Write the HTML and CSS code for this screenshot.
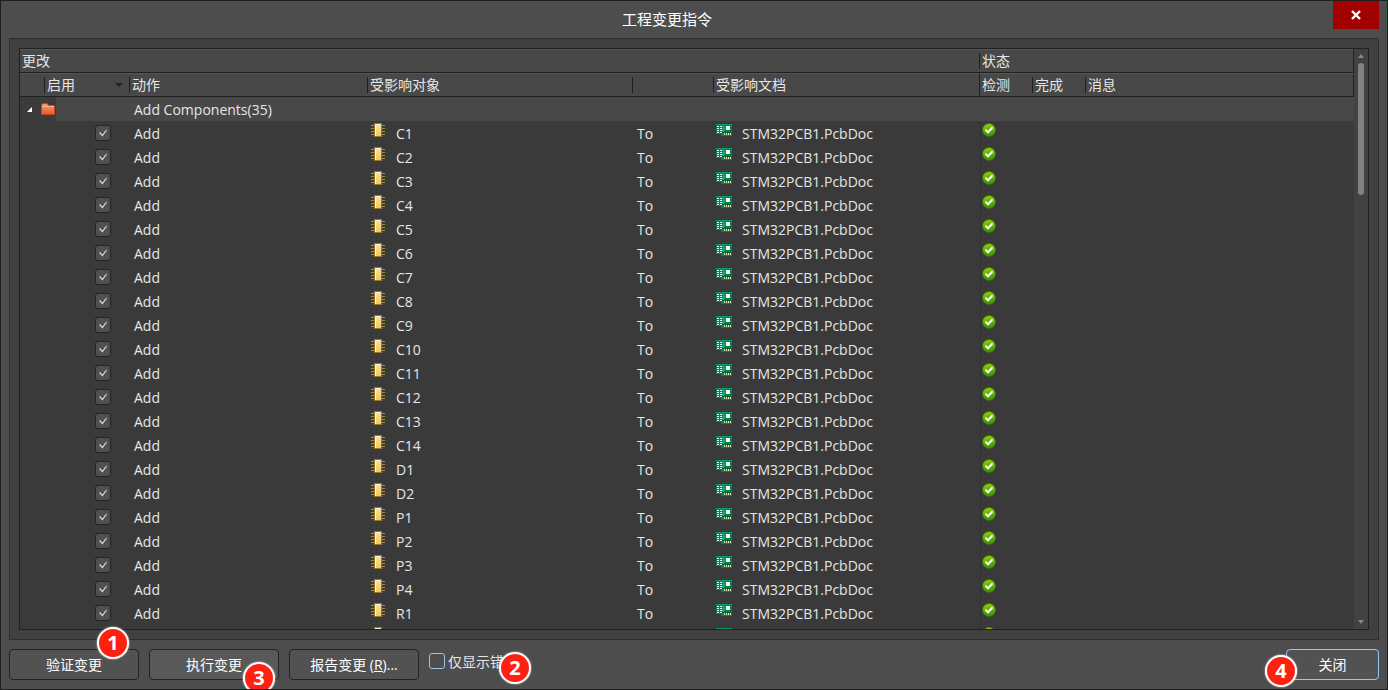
FILE: index.html
```html
<!DOCTYPE html>
<html lang="zh-CN">
<head>
<meta charset="utf-8">
<title>工程变更指令</title>
<link rel="stylesheet" href="styles.css">
</head>
<body>
<svg class="sprites" aria-hidden="true">
  <defs>
    <linearGradient id="gold" x1="0" y1="0" x2="0" y2="1"><stop offset="0" stop-color="#fbe3a3"/><stop offset="1" stop-color="#f3c65e"/></linearGradient>
    <linearGradient id="leaf" x1="0" y1="0" x2="0" y2="1"><stop offset="0" stop-color="#8ed00c"/><stop offset="0.5" stop-color="#5fb806"/><stop offset="1" stop-color="#2f8f04"/></linearGradient>
    <linearGradient id="coral" x1="0" y1="0" x2="0" y2="1"><stop offset="0" stop-color="#fb9a6c"/><stop offset="1" stop-color="#e25c2c"/></linearGradient>
    <symbol id="chip" viewBox="0 0 14 14">
      <path d="M0 2.5H14M0 5.5H14M0 8.5H14M0 11.5H14" stroke="#a98a3c" fill="none"/>
      <rect x="3" width="8" height="14" fill="#94752c"/>
      <rect x="4" y="1" width="6" height="12" fill="url(#gold)"/>
      <path d="M4 1.5H10M4.5 1V13" stroke="#fff3cf" fill="none"/>
    </symbol>
    <symbol id="pcb" viewBox="0 0 16 12">
      <path d="M0 0H16V12H5V10H0Z" fill="#058053"/>
      <path d="M0 .5H16" stroke="#0a9b67"/>
      <path d="M1 2.5H3M1 4.5H3M1 6.5H3M1 8.5H3M4 2.5H6M4 4.5H6M4 6.5H6M4 8.5H6" stroke="#d9f3e6"/>
      <path d="M7 2.5H9M7 4.5H9M6.5 6.5H9M7 1.5V8" stroke="#35b583" fill="none"/>
      <rect x="10" y="2" width="4" height="4" fill="#f4f4f4"/>
      <path d="M6 8.5H16" stroke="#04603e"/>
      <path d="M8.500 9V11M10.500 9V11M12.500 9V11M14.500 9V11" stroke="#e9e6a8"/>
    </symbol>
    <symbol id="passed" viewBox="0 0 14 14">
      <circle cx="7" cy="7" r="6.400" fill="url(#leaf)" stroke="#3d7d10" stroke-width=".6"/>
      <path d="M3.500 6.700L6 9.300L10.600 4.400" stroke="#fff" stroke-width="1.900" fill="none"/>
    </symbol>
  </defs>
</svg>
<main class="dialog">
  <header class="titlebar">
    <h1 class="title">工程变更指令</h1>
    <button class="window-close" type="button" aria-label="关闭窗口">
      <svg width="12" height="12" viewBox="0 0 12 12"><path d="M2 2L10 10M10 2L2 10" stroke="#fff" stroke-width="2.400"/></svg>
    </button>
  </header>
  <section class="panel">
    <div class="grid">
      <div class="viewport">
        <table class="changes">
          <colgroup>
            <col class="c-tree"><col class="c-enable"><col class="c-action"><col class="c-object"><col class="c-to"><col class="c-doc"><col class="c-state"><col class="c-state"><col>
          </colgroup>
          <thead>
            <tr><th colspan="6">更改</th><th class="sep" colspan="3">状态</th></tr>
            <tr>
              <th></th>
              <th class="sep">启用<svg class="sort" width="8" height="4" viewBox="0 0 8 4"><path d="M0 0H8L4 4Z" fill="#222"/></svg></th>
              <th class="sep">动作</th>
              <th class="sep">受影响对象</th>
              <th class="sep"></th>
              <th class="sep">受影响文档</th>
              <th class="full">检测</th>
              <th class="sep">完成</th>
              <th class="sep">消息</th>
            </tr>
          </thead>
          <tbody id="rows">
            <tr class="group">
              <td class="tree" colspan="2">
                <svg width="36" height="24" viewBox="0 0 36 24"><path d="M0 0H36V24H0Z" fill="#3b3b3b"/><path d="M12 10V15H7Z" fill="#fff"/><path d="M21.500 8.500L22.500 6.500H27.500L28.500 8.500H34.500V17.500H21.500Z" fill="url(#coral)" stroke="#c4451b"/><path d="M22 9.500H34" stroke="#ffb48d"/></svg>
              </td>
              <td>Add Components(35)</td><td></td><td></td><td></td><td class="state"></td><td></td><td></td>
            </tr>
          </tbody>
        </table>
      </div>
      <div class="scrollbar">
        <svg width="6" height="4" viewBox="0 0 6 4"><path d="M3 0L6 4H0Z" fill="#858585"/></svg>
        <div class="track"><div class="thumb"></div></div>
        <svg width="6" height="4" viewBox="0 0 6 4"><path d="M0 0H6L3 4Z" fill="#858585"/></svg>
      </div>
    </div>
  </section>
  <footer class="actions">
    <div class="anchor"><button class="btn" type="button">验证变更</button><span class="badge b1">1</span></div>
    <div class="anchor"><button class="btn lit" type="button">执行变更</button><span class="badge b3">3</span></div>
    <div class="anchor"><button class="btn" type="button">报告变更 (<u>R</u>)...</button></div>
    <div class="anchor only-errors"><input class="box" type="checkbox" id="errors"><label for="errors">仅显示错误</label><span class="badge b2">2</span></div>
    <div class="anchor last"><button class="btn primary" type="button">关闭</button><span class="badge b4">4</span></div>
  </footer>
</main>
<script src="rows.js"></script>
</body>
</html>
```
FILE: styles.css
```css
* { box-sizing: border-box; }
body {
  margin: 0;
  background: #4d4d4d;
  color: #e6e6e6;
  font: 14px/20px "Open Sans", "Noto Sans CJK SC", sans-serif;
}
svg { display: block; }
button { font: inherit; color: inherit; }
.sprites { position: absolute; width: 0; height: 0; }
.dialog {
  display: flex;
  flex-direction: column;
  height: 100vh;
  border: 1px solid #1f1f1f;
  overflow: hidden;
}
.titlebar { display: flex; height: 37px; padding-right: 8px; flex: none; }
.title { flex: 1; margin: 0; font-size: 15px; font-weight: 400; line-height: 36px; text-align: center; color: #fff; }
.window-close {
  display: grid;
  place-items: center;
  width: 46px;
  height: 28px;
  padding: 0;
  border: 0;
  background: #a30000;
}
.panel {
  display: flex;
  flex: 1;
  min-height: 0;
  margin: 0 8px;
  padding: 9px;
  border: 1px solid #2e2e2e;
  background: #404040;
}
.grid { display: flex; flex: 1; min-width: 0; border: 1px solid #202020; background: #3a3a3a; }
.viewport { flex: 1; min-width: 0; overflow: hidden; }
.changes { width: 100%; table-layout: fixed; border-collapse: separate; border-spacing: 0; }
.c-tree { width: 24px; }
.c-enable { width: 85px; }
.c-action { width: 238px; }
.c-object { width: 265px; }
.c-to { width: 81px; }
.c-doc { width: 266px; }
.c-state { width: 53px; }
th {
  height: 24px;
  padding: 0 0 2px 3px;
  border-top: 1px solid #565656;
  border-bottom: 1px solid #202020;
  background: #484848;
  font-family: "Noto Sans CJK SC", sans-serif;
  font-weight: 400;
  line-height: 20px;
  text-align: left;
  white-space: nowrap;
}
th:first-child { padding-left: 2px; }
th:last-child { border-right: 1px solid #202020; }
.sep { background: linear-gradient(#202020, #202020) 0 3px / 1px 16px no-repeat #484848; }
.full { border-left: 1px solid #202020; padding-left: 2px; }
.sort { display: inline-block; margin: 0 0 3px 40px; vertical-align: middle; }
td { height: 24px; padding: 2px 0 0 5px; line-height: 22px; white-space: nowrap; }
.tree { padding: 0; }
.group td { background: #484848; }
.tick { padding: 0 0 0 75px; }
.state { padding-left: 3px; background: linear-gradient(#303030, #303030) 1px 0 / 1px 100% no-repeat; }
.group .state { background-color: #484848; }
.icon-cell { padding-left: 4px; }
.doc { padding-left: 3px; }
.item { display: flex; gap: 10px; }
.chip { width: 14px; height: 14px; }
.object .item { gap: 11px; }
.pcb { width: 16px; height: 12px; margin-top: 1px; }
.passed { width: 14px; height: 14px; margin-bottom: 8px; }
.box {
  display: block;
  appearance: none;
  width: 16px;
  height: 16px;
  margin: 0;
  border: 1px solid #99c4ec;
  border-radius: 3px;
}
.tick .box {
  border-color: #252525;
  background: #505050 url("data:image/svg+xml,%3Csvg xmlns='http://www.w3.org/2000/svg' width='14' height='14'%3E%3Cpath d='M3.500 6.500L6.500 9.500L10.500 4' fill='none' stroke='%23d8d8d8' stroke-width='1.200'/%3E%3C/svg%3E") no-repeat;
}
.scrollbar { display: flex; flex: none; flex-direction: column; align-items: center; gap: 5px; width: 14px; padding: 5px 0; background: #424242; }
.track { flex: 1; width: 6px; }
.thumb { height: 24%; border-radius: 3px; background: #828282; }
.actions { display: flex; flex: none; gap: 10px; height: 49px; padding: 9px 8px 0; }
.anchor { position: relative; height: 31px; }
.btn {
  width: 130px;
  height: 31px;
  padding: 0;
  border: 1px solid #242424;
  border-radius: 4px;
  background: #525252;
  color: #fff;
}
.lit { background: #595959; }
.primary { width: 93px; border-color: #99c4ec; }
.last { margin-left: auto; }
.only-errors { display: flex; gap: 3px; padding-top: 4px; }
.only-errors label { line-height: 18px; }
.badge {
  position: absolute;
  width: 32px;
  height: 32px;
  border: 2px solid #fff;
  border-radius: 50%;
  background: #ff2012;
  box-shadow: 0 0 2px #ddd;
  color: #fff;
  font: 700 20px/27px "Open Sans", sans-serif;
  text-align: center;
}
.b1 { left: 88px; top: -22px; }
.b2 { left: 70px; top: 3px; }
.b3 { left: 94px; top: 13px; }
.b4 { left: -21px; top: 6px; }
```
FILE: rows.js
```js
const parts = ["C1","C2","C3","C4","C5","C6","C7","C8","C9","C10","C11","C12","C13","C14","D1","D2","P1","P2","P3","P4","R1","R2"];
document.getElementById("rows").insertAdjacentHTML("beforeend", parts.map(name => `
  <tr>
    <td class="tick" colspan="2"><input class="box" type="checkbox" checked aria-label="启用 ${name}"></td>
    <td>Add</td>
    <td class="object icon-cell"><div class="item"><svg class="chip"><use href="#chip"/></svg>${name}</div></td>
    <td>To</td>
    <td class="doc"><div class="item"><svg class="pcb"><use href="#pcb"/></svg>STM32PCB1.PcbDoc</div></td>
    <td class="state"><svg class="passed"><use href="#passed"/></svg></td>
    <td></td><td></td>
  </tr>`).join(""));
```
